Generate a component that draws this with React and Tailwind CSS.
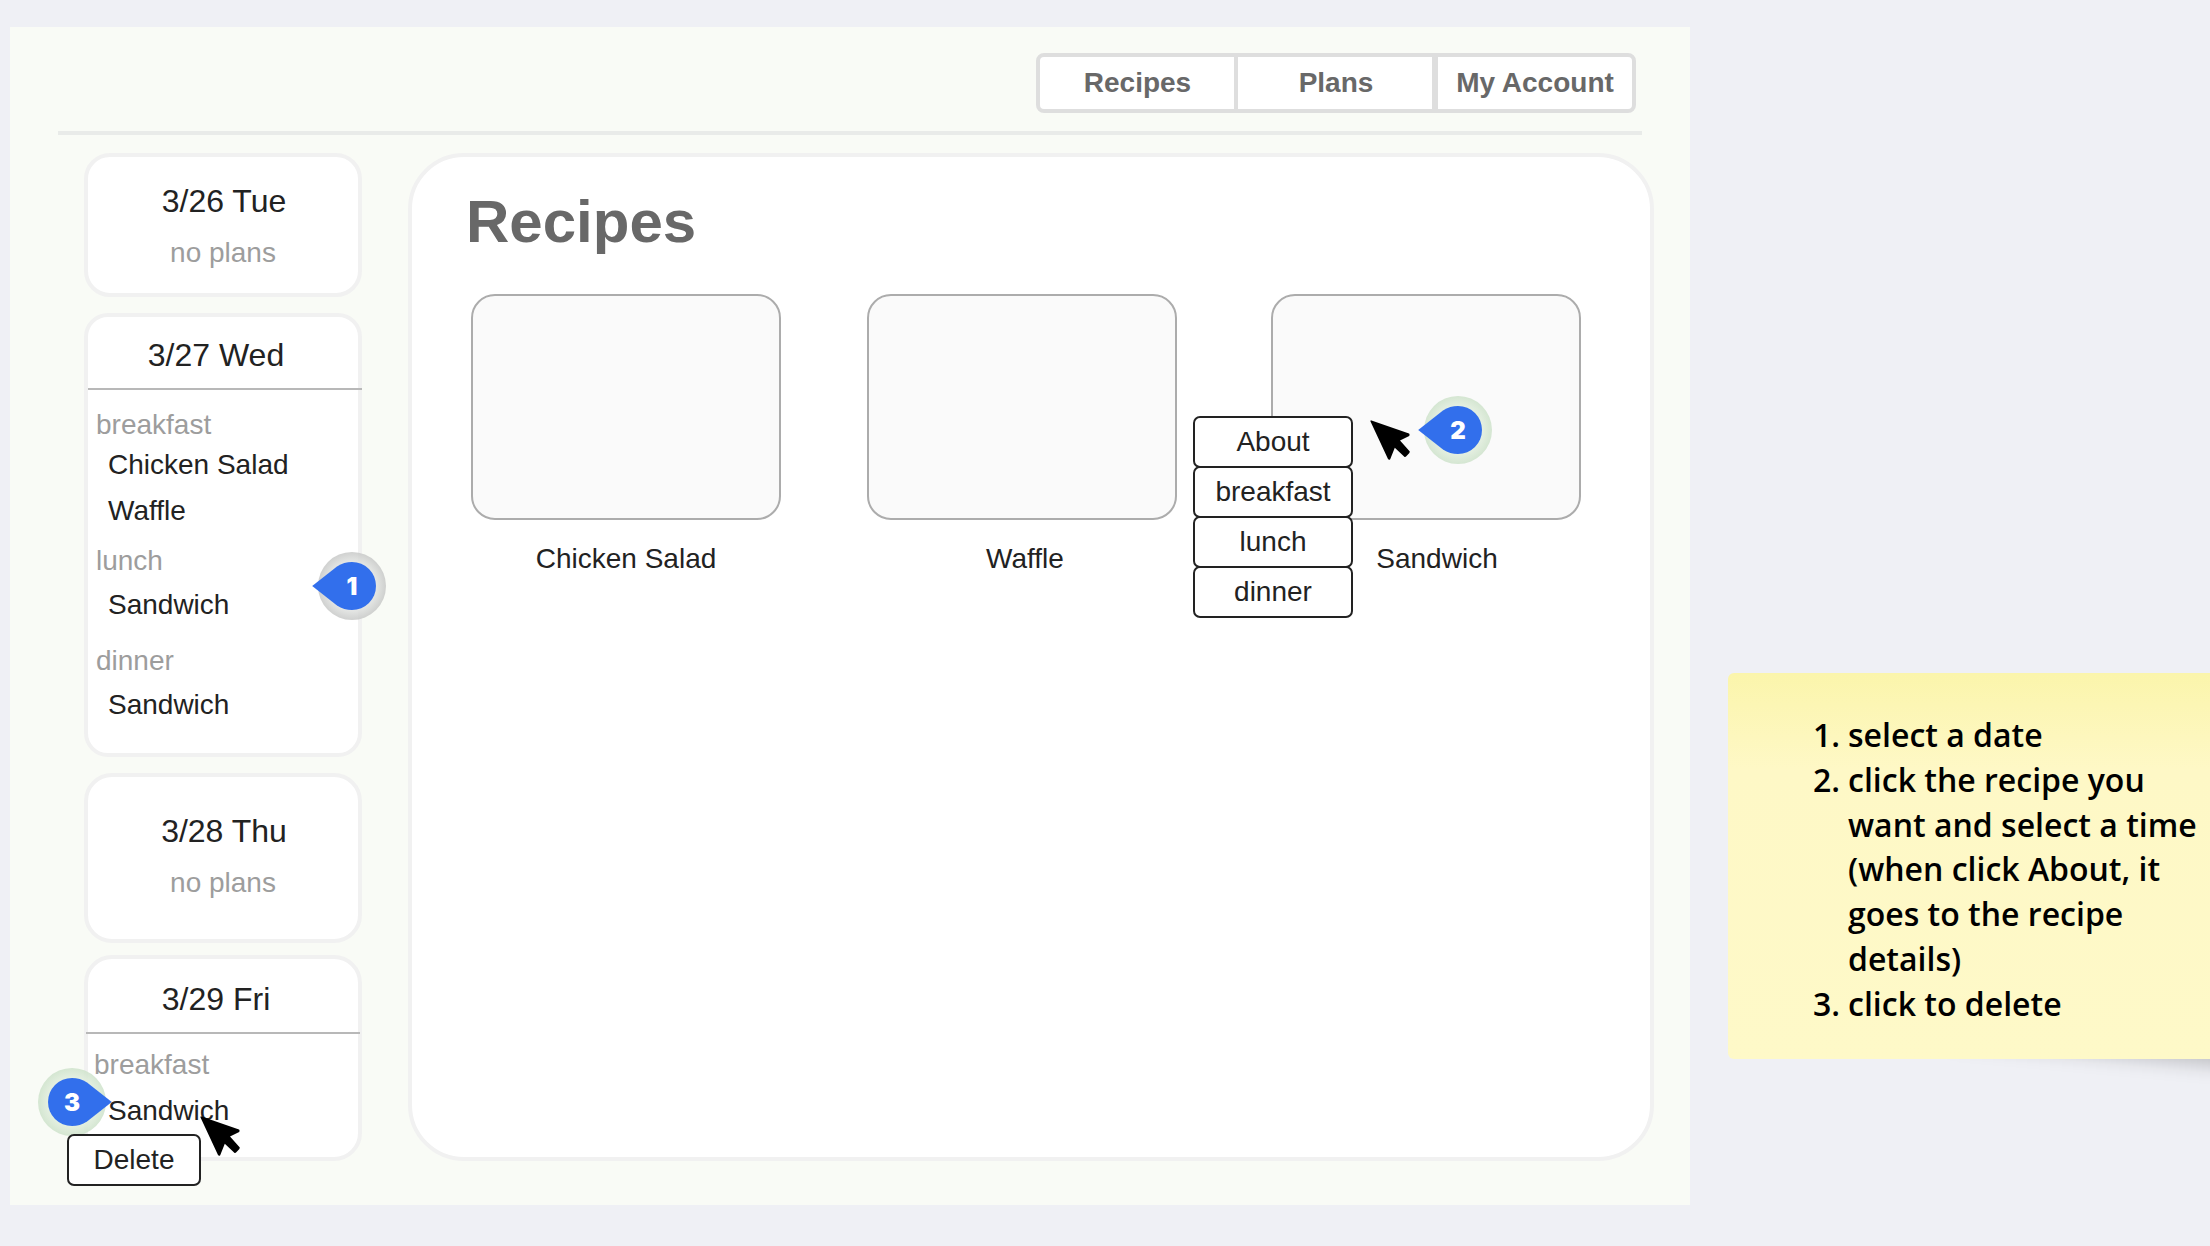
import React from "react";
import clsx from "clsx";

function Cursor({ className }) {
  return (
    <svg viewBox="0 0 40 40" className={clsx("absolute h-10 w-10", className)} aria-hidden="true">
      <path
        d="M.8.2 39 13.6Q40 14.600 39.2 16L30 20.6 39.8 31.4 39.4 33 35.8 36.8 34.6 37 24.8 27.8 20.2 39.2Q19 40.4 18 39L.4 1.200Z"
        fill="#000"
      />
    </svg>
  );
}

function Marker({ n, id, tone = "green", flip = false, className }) {
  const stops = tone === "gray" ? ["#e2e4e2", "#c9cac9"] : ["#e2eede", "#cfe3cc"];
  return (
    <div className={clsx("absolute h-[68px] w-[80px]", className)}>
      <svg viewBox="-6 0 80 68" className={clsx("absolute inset-0 h-full w-full", flip && "-scale-x-100")} aria-hidden="true">
        <defs>
          <radialGradient id={id}>
            <stop offset="0.7" stopColor={stops[0]} />
            <stop offset="1" stopColor={stops[1]} />
          </radialGradient>
        </defs>
        <circle cx="34" cy="34" r="34" fill={"url(#" + id + ")"} fillOpacity="0.88" />
        <path d="M-5.8 34 19 14.6C23.5 11.4 29 10 34 10a24 24 0 0 1 0 48c-5 0-10.500-1.400-15-4.600Z" fill="#326fec" />
      </svg>
      <span className="absolute top-[10px] left-[16px] h-12 w-12 text-center font-['Inter',sans-serif] text-[24px] leading-[49px] font-black text-white">
        {n}
      </span>
    </div>
  );
}

function Card({ className, children }) {
  return (
    <section className={clsx("relative border-4 border-[#f1f1f1] bg-white", className)}>{children}</section>
  );
}

function DateTitle({ className, children }) {
  return <h2 className={clsx("text-center text-[32px] leading-9", className)}>{children}</h2>;
}

function NoPlans() {
  return <p className="mt-[18px] text-center text-[28px] leading-8 text-[#9d9d9d]">no plans</p>;
}

function Meal({ className, children }) {
  return <h3 className={clsx("text-[28px] leading-8 text-[#9d9d9d]", className)}>{children}</h3>;
}

function Dish({ className, children }) {
  return <p className={clsx("pl-5 text-[28px] leading-8", className)}>{children}</p>;
}

function Recipe({ name, className, labelClass, children }) {
  return (
    <div className={clsx("relative w-[310px]", className)}>
      <div className="h-[226px] rounded-[24px] border-2 border-[#acacac] bg-[#fafafa]" />
      <p className={clsx("mt-[23px] text-center text-[28px] leading-8", labelClass)}>{name}</p>
      {children}
    </div>
  );
}

const option =
  "flex h-[52px] items-center justify-center rounded-[7px] border-2 border-[#222] bg-white text-[28px] leading-8";

export default function App() {
  return (
    <div className="flex h-[1246px] w-[2210px] overflow-hidden bg-[#eff0f5] pt-[27px] pl-[10px] font-['Liberation_Sans',Arial,sans-serif] text-[#222]">
      <main className="h-[1178px] w-[1680px] shrink-0 bg-[#f9fbf6]">
        <header className="mx-12 h-[108px] border-b-4 border-[#e9ebe9] pt-[26px] pr-[6px]">
          <nav className="ml-auto flex h-[60px] w-[600px] overflow-hidden rounded-lg border-4 border-[#dedede] bg-white text-[28px] leading-8 font-bold text-[#686868]">
            <a className="flex w-[198px] items-center justify-center border-r-4 border-[#dedede] pb-px pl-px">Recipes</a>
            <a className="flex w-[200px] items-center justify-center border-r-6 border-[#dedede] pb-px pl-[2px]">Plans</a>
            <a className="flex w-[194px] items-center justify-center pb-px">My Account</a>
          </nav>
        </header>

        <div className="mt-[18px] ml-[74px] flex gap-[46px]">
          <aside className="w-[278px]">
            <Card className="h-36 rounded-[26px] pt-[26px]">
              <DateTitle className="pl-[2px]">3/26 Tue</DateTitle>
              <NoPlans />
            </Card>

            <Card className="mt-4 h-[444px] rounded-[24px] pt-5">
              <DateTitle className="pr-[14px]">3/27 Wed</DateTitle>
              <div className="-mr-1 mt-[15px] h-[2px] bg-[#b8b8b8]" />
              <Meal className="mt-[19px] pl-2">breakfast</Meal>
              <Dish className="mt-2">Chicken Salad</Dish>
              <Dish className="mt-[14px]">Waffle</Dish>
              <Meal className="mt-[18px] pl-2">lunch</Meal>
              <Dish className="mt-3">Sandwich</Dish>
              <Meal className="mt-6 pl-2">dinner</Meal>
              <Dish className="mt-3">Sandwich</Dish>
              <Marker n="1" id="halo-1" tone="gray" className="top-[235px] left-[224px]" />
            </Card>

            <Card className="mt-4 h-[170px] rounded-[28px] pt-9">
              <DateTitle className="pl-[2px]">3/28 Thu</DateTitle>
              <NoPlans />
            </Card>

            <Card className="mt-3 h-[206px] rounded-[28px] pt-[22px]">
              <DateTitle className="pr-[14px]">3/29 Fri</DateTitle>
              <div className="mx-[-2px] mt-[15px] h-[2px] bg-[#b8b8b8]" />
              <Meal className="mt-[15px] pl-[6px]">breakfast</Meal>
              <Marker n="3" id="halo-3" flip className="top-[109px] left-[-56px]" />
              <Dish className="relative mt-[14px]">Sandwich</Dish>
              <button className={clsx("absolute top-[175px] left-[-21px] w-[134px]", option)}>Delete</button>
              <Cursor className="top-[157px] left-[112px]" />
            </Card>
          </aside>

          <section className="h-[1008px] w-[1246px] rounded-[56px] border-4 border-[#f1f1f1] bg-white pt-[31px] pl-[59px]">
            <h1 className="-ml-[5px] text-[60px] leading-[68px] font-bold text-[#686868]">Recipes</h1>
            <div className="mt-[38px] flex">
              <Recipe name="Chicken Salad" />
              <Recipe name="Waffle" className="ml-[86px]" labelClass="pl-[6px]" />
              <Recipe name="Sandwich" className="ml-[94px]" labelClass="pl-[22px]">
                <div className="absolute top-[122px] left-[-78px] w-40">
                  <div className={option}>About</div>
                  <div className={clsx("-mt-[2px]", option)}>breakfast</div>
                  <div className={clsx("-mt-[2px]", option)}>lunch</div>
                  <div className={clsx("-mt-[2px]", option)}>dinner</div>
                </div>
                <Cursor className="top-[126px] left-[99px]" />
                <Marker n="2" id="halo-2" className="top-[102px] left-[147px]" />
              </Recipe>
            </div>
          </section>
        </div>
      </main>

      <aside className="relative mt-[646px] ml-[38px] h-[386px] w-[540px] shrink-0">
        <div className="absolute right-[-40px] bottom-[-15px] h-[30px] w-[360px] origin-bottom-right rotate-[5deg] bg-black/20 blur-[9px]" />
        <ol className="relative h-full rounded-md bg-linear-to-b from-[#fbf5ab] via-[#fef8c6] via-25% to-[#fef9c8] pt-10 pl-[85px] font-['Open_Sans',sans-serif] text-[32px] leading-[44.8px] font-semibold text-black">
          <li className="flex"><span className="w-[35px]">1.</span><span>select a date</span></li>
          <li className="flex">
            <span className="w-[35px]">2.</span>
            <span>
              click the recipe you<br />want and select a time<br />(when click About, it<br />goes to the recipe<br />details)
            </span>
          </li>
          <li className="flex"><span className="w-[35px]">3.</span><span>click to delete</span></li>
        </ol>
      </aside>
    </div>
  );
}
